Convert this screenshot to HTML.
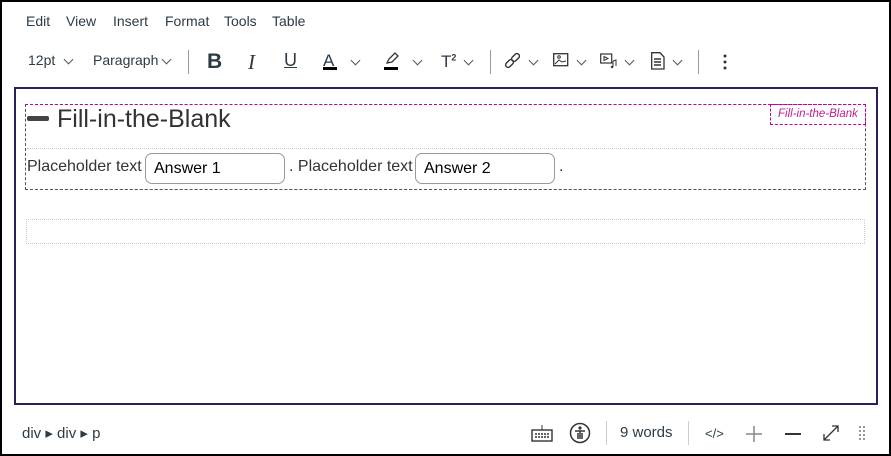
<!DOCTYPE html>
<html><head><meta charset="utf-8"><style>
*{margin:0;padding:0;box-sizing:border-box}
body{width:891px;height:456px;overflow:hidden;background:#fff;font-family:"Liberation Sans",sans-serif;color:#2d3b45;position:relative}
.frame{position:absolute;left:0;top:0;width:891px;height:456px;border:2px solid #000}
.a{position:absolute;white-space:nowrap}
.menu{top:13px;font-size:14px;color:#2d3b45}
.tb{top:52px;font-size:14px}
.chev{position:absolute;width:7px;height:7px;border-right:1.2px solid #555;border-bottom:1.2px solid #555;transform:rotate(45deg)}
.sep{position:absolute;width:1px;background:#999}
.ed{position:absolute;left:14px;top:87px;width:864px;height:318px;border:2px solid #2a1f5a}
.inp{position:absolute;height:31px;border:1px solid #999;border-radius:7px;font-size:16px;color:#000;padding:6px 8px}
.ft{top:424px;font-size:15px;color:#2d3b45}
</style></head><body>
<div class="frame"></div>
<div class="a menu" style="left:26px">Edit</div>
<div class="a menu" style="left:66px">View</div>
<div class="a menu" style="left:113px">Insert</div>
<div class="a menu" style="left:165px">Format</div>
<div class="a menu" style="left:224px">Tools</div>
<div class="a menu" style="left:272px">Table</div>

<div class="a tb" style="left:28px">12pt</div><div class="chev" style="left:65px;top:56px"></div>
<div class="a tb" style="left:93px">Paragraph</div><div class="chev" style="left:163px;top:56px"></div>
<div class="sep" style="left:188px;top:50px;height:24px"></div>
<div class="a" style="left:207px;top:50px;font-size:21px;font-weight:bold">B</div>
<div class="a" style="left:248px;top:50px;font-size:21px;font-style:italic;font-family:'Liberation Serif',serif">I</div>
<div class="a" style="left:284px;top:50px;font-size:18px;text-decoration:underline">U</div>
<div class="a" style="left:323px;top:51px;font-size:17px">A</div><div class="a" style="left:323px;top:67px;width:14px;height:3px;background:#000"></div>
<div class="chev" style="left:352px;top:57px"></div>
<svg class="a" style="left:384px;top:52px" width="16" height="14"><path d="M3 11 L5 7 L11 1 L14 4 L8 10 Z" fill="none" stroke="#333" stroke-width="1.3"/></svg>
<div class="a" style="left:384px;top:67px;width:14px;height:3px;background:#000"></div>
<div class="chev" style="left:414px;top:57px"></div>
<div class="a" style="left:441px;top:52px;font-size:17px">T<sup style="font-size:9px;font-weight:bold">2</sup></div>
<div class="chev" style="left:465px;top:57px"></div>
<div class="sep" style="left:490px;top:50px;height:24px"></div>
<svg class="a" style="left:504px;top:52px" width="18" height="18"><g fill="none" stroke="#333" stroke-width="1.4"><rect x="9" y="1" width="5" height="9" rx="2.5" transform="rotate(45 11.5 5.5)"/><rect x="3" y="7" width="5" height="9" rx="2.5" transform="rotate(45 5.5 11.5)"/></g></svg>
<div class="chev" style="left:530px;top:57px"></div>
<svg class="a" style="left:553px;top:53px" width="16" height="14"><rect x=".7" y=".7" width="14" height="12" fill="none" stroke="#333" stroke-width="1.3"/><path d="M2 11 L6 7 L9 9 L13 8" fill="none" stroke="#333"/><circle cx="6" cy="4" r="1.3" fill="none" stroke="#333"/></svg>
<div class="chev" style="left:578px;top:57px"></div>
<svg class="a" style="left:600px;top:53px" width="18" height="16"><rect x=".7" y="1" width="11" height="9" fill="none" stroke="#333" stroke-width="1.2"/><path d="M4 3.5 L8 5.5 L4 7.5Z" fill="none" stroke="#333"/><path d="M13 8 V14 M13 8 L16 7 V13" stroke="#333" fill="none"/><circle cx="12" cy="14" r="1.2" fill="#333"/></svg>
<div class="chev" style="left:626px;top:57px"></div>
<svg class="a" style="left:651px;top:52px" width="14" height="18"><path d="M.7 .7 H9 L13 5 V17 H.7 Z" fill="none" stroke="#333" stroke-width="1.3"/><path d="M3 7 H10 M3 10 H10 M3 13 H10" stroke="#333" stroke-width="1.4"/></svg>
<div class="chev" style="left:674px;top:57px"></div>
<div class="sep" style="left:698px;top:50px;height:24px"></div>
<svg class="a" style="left:722px;top:54px" width="6" height="16"><circle cx="3" cy="2" r="1.5" fill="#333"/><circle cx="3" cy="8" r="1.5" fill="#333"/><circle cx="3" cy="14" r="1.5" fill="#333"/></svg>

<div class="ed"></div>
<div class="a" style="left:25px;top:104px;width:841px;height:86px;border:1px dashed #555"></div>
<div class="a" style="left:25px;top:104px;width:841px;height:1px;border-top:1px dashed #c000a0"></div>
<div class="a" style="left:25px;top:189px;width:841px;height:1px;border-top:1px dashed #555"></div>
<div class="a" style="left:27px;top:116px;width:22px;height:5px;background:#444;border-radius:2px"></div>
<div class="a" style="left:57px;top:105px;font-size:25px;color:#333">Fill-in-the-Blank</div>
<div class="a" style="left:770px;top:104px;width:96px;height:21px;border:1px dashed #c000a0;font-size:11.5px;font-style:italic;color:#c02090;padding:3px 0 0 7px">Fill-in-the-Blank</div>
<div class="a" style="left:27px;top:148px;width:838px;border-top:1px dotted #ccc"></div>
<div class="a" style="left:27px;top:158px;font-size:16px;color:#333">Placeholder text</div>
<div class="inp" style="left:145px;top:153px;width:140px">Answer 1</div>
<div class="a" style="left:289px;top:158px;font-size:16px;color:#333">. Placeholder text</div>
<div class="inp" style="left:415px;top:153px;width:140px">Answer 2</div>
<div class="a" style="left:559px;top:158px;font-size:16px;color:#333">.</div>
<div class="a" style="left:26px;top:219px;width:839px;height:25px;border:1px dotted #ccc"></div>

<div class="a ft" style="left:22px">div ▸ div ▸ p</div>
<svg class="a" style="left:531px;top:424px" width="22" height="18"><path d="M11 1 V6" stroke="#333"/><rect x="1" y="6" width="20" height="11" fill="none" stroke="#333" stroke-width="1.4"/><path d="M4 10h14M4 13h14" stroke="#333" stroke-width="1.5" stroke-dasharray="2 1"/></svg>
<svg class="a" style="left:569px;top:422px" width="22" height="22"><circle cx="11" cy="11" r="9.5" fill="none" stroke="#333" stroke-width="1.5"/><circle cx="11" cy="6" r="1.6" fill="#333"/><path d="M6 9 H16 M11 9 V17 M9 11 V17 M13 11 V17" stroke="#333" stroke-width="1.5"/></svg>
<div class="sep" style="left:606px;top:421px;height:24px;background:#ccc"></div>
<div class="a ft" style="left:620px">9 words</div>
<div class="sep" style="left:688px;top:421px;height:24px;background:#ccc"></div>
<div class="a ft" style="left:705px;top:426px;font-size:13px">&lt;/&gt;</div>
<svg class="a" style="left:745px;top:425px" width="18" height="18"><path d="M9 1V17M1 9H17" stroke="#888" stroke-width="1.5"/></svg>
<svg class="a" style="left:784px;top:425px" width="18" height="18"><path d="M1 9H17" stroke="#333" stroke-width="2"/></svg>
<svg class="a" style="left:822px;top:424px" width="18" height="18"><path d="M2 16L16 2M10 2H16V8M2 10V16H8" stroke="#333" stroke-width="1.3" fill="none"/></svg>
<svg class="a" style="left:858px;top:425px" width="8" height="18" fill="#777"><circle cx="2" cy="2" r="1"/><circle cx="6" cy="2" r="1"/><circle cx="2" cy="6" r="1"/><circle cx="6" cy="6" r="1"/><circle cx="2" cy="10" r="1"/><circle cx="6" cy="10" r="1"/><circle cx="2" cy="14" r="1"/><circle cx="6" cy="14" r="1"/></svg>
</body></html>
